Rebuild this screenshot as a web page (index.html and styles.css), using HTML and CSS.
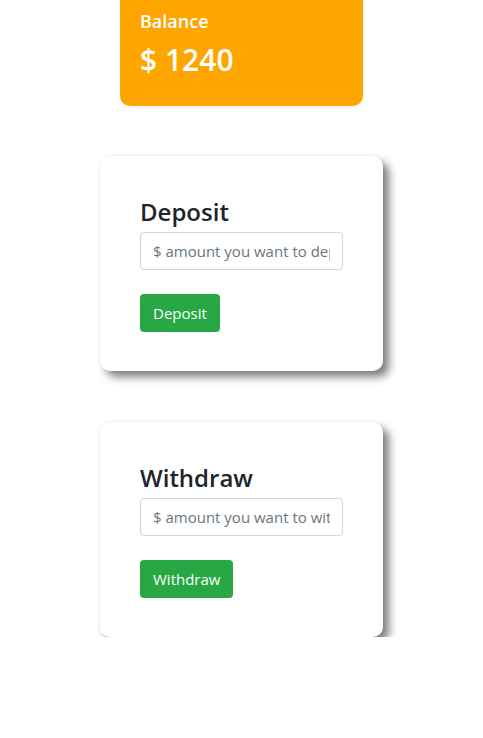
FILE: index.html
```html
<!DOCTYPE html>
<html>
<head>
<meta charset="utf-8">
<link rel="stylesheet" href="styles.css">
</head>
<body>
<main class="page">
  <section class="balance">
    <div class="balance-label">Balance</div>
    <div class="balance-amount">$ 1240</div>
  </section>
  <section class="card">
    <h3 class="card-title">Deposit</h3>
    <input class="field" type="text" placeholder="$ amount you want to deposit">
    <button class="btn">Deposit</button>
  </section>
  <section class="card">
    <h3 class="card-title">Withdraw</h3>
    <input class="field" type="text" placeholder="$ amount you want to withdraw">
    <button class="btn">Withdraw</button>
  </section>
</main>
</body>
</html>
```
FILE: styles.css
```css
html, body {
  margin: 0;
  padding: 0;
  background: #fff;
}
body {
  font-family: "Open Sans", "Noto Sans", sans-serif;
  color: #212529;
}
.page {
  display: flex;
  flex-direction: column;
  align-items: center;
  gap: 50px;
}
.balance {
  width: 243px;
  box-sizing: border-box;
  background: #ffa500;
  color: #fff;
  border-radius: 0 0 10px 10px;
  padding: 8px 20px 27px;
  display: flex;
  flex-direction: column;
  gap: 6px;
}
.balance-label {
  font-size: 18px;
  font-weight: 600;
  line-height: 27px;
}
.balance-amount {
  font-size: 30px;
  font-weight: 600;
  line-height: 38px;
}
.card {
  width: 283px;
  box-sizing: border-box;
  background: #fff;
  border-radius: 10px;
  box-shadow: 6px 6px 8px rgba(0,0,0,0.5), 0 0 3px rgba(0,0,0,0.08);
  padding: 40px 40px 39px;
  display: flex;
  flex-direction: column;
  align-items: flex-start;
}
.card + .card {
  margin-top: 1px;
}
.card-title {
  margin: 0 0 4px;
  font-size: 24px;
  font-weight: 600;
  line-height: 32px;
}
.field {
  width: 203px;
  height: 38px;
  box-sizing: border-box;
  border: 1px solid #ced4da;
  border-radius: 4px;
  padding: 0 12px;
  font-family: inherit;
  font-size: 15px;
  color: #495057;
  margin-bottom: 24px;
}
.field::placeholder {
  color: #6c757d;
}
.btn {
  height: 38px;
  box-sizing: border-box;
  background: #28a745;
  color: #fff;
  border: none;
  border-radius: 4px;
  padding: 0 13px;
  font-family: inherit;
  font-size: 15px;
}
```
